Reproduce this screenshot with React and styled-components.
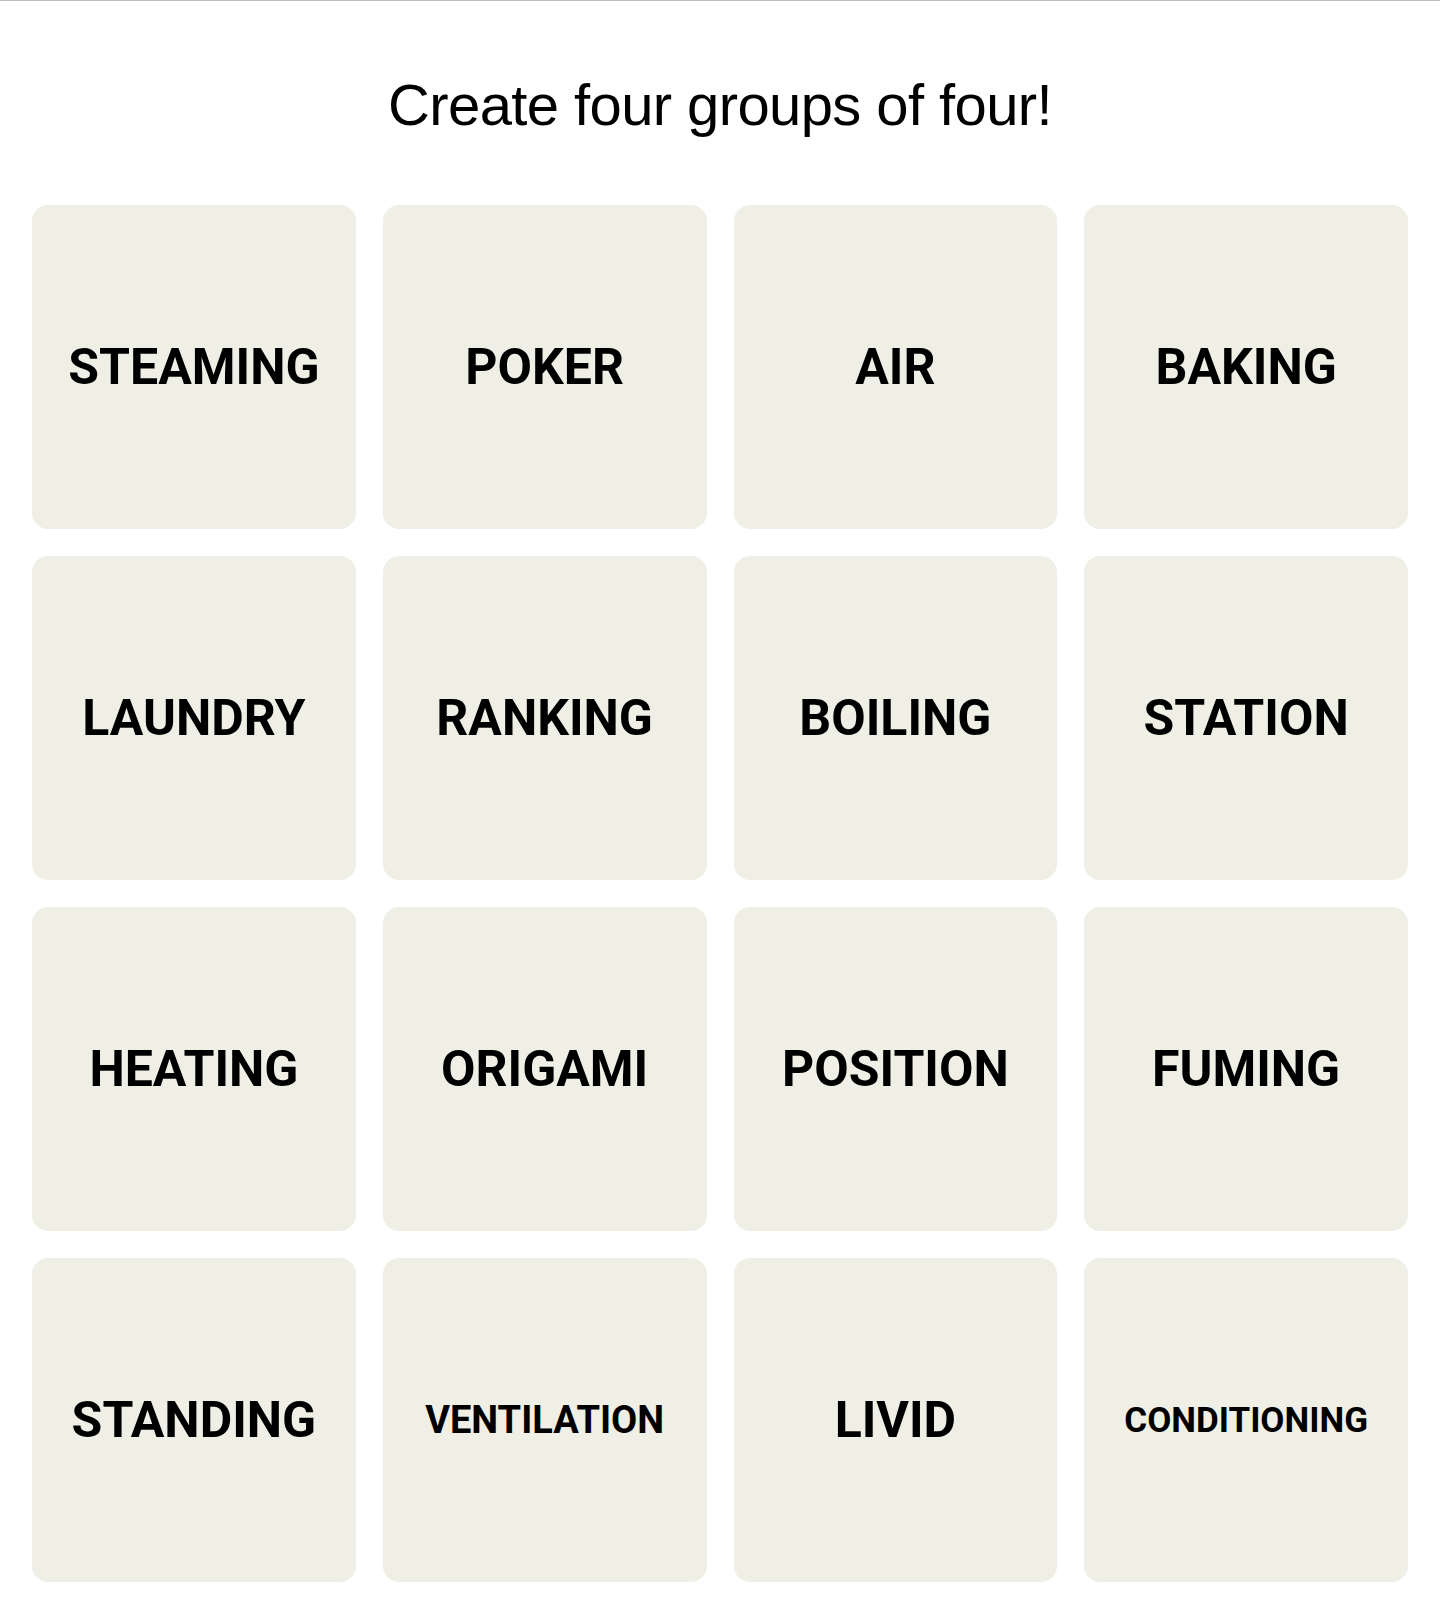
import styled, { createGlobalStyle } from "styled-components"

const words = [
    "STEAMING", "POKER", "AIR", "BAKING",
    "LAUNDRY", "RANKING", "BOILING", "STATION",
    "HEATING", "ORIGAMI", "POSITION", "FUMING",
    "STANDING", "VENTILATION", "LIVID", "CONDITIONING",
]

// long words get shrunk so they still fit inside the tile
const fontSizeFor = (word) => {
    if (word.length >= 12) return 35
    if (word.length >= 11) return 38
    return 50
}

export default function App() {
    return (
        <>
            <GlobalStyle />
            <Page>
                <Title>Create four groups of four!</Title>
                <Board>
                    {words.map((word) => (
                        <Card key={word} $size={fontSizeFor(word)}>
                            {word}
                        </Card>
                    ))}
                </Board>
            </Page>
        </>
    )
}

const GlobalStyle = createGlobalStyle`
    *{
        box-sizing:border-box;
    }

    body{
        margin:0;
        background-color:#ffffff;
        color:#000000;
        font-family:"Liberation Sans", Arial, sans-serif;
    }
`

const Page = styled.div`
    width:100%;
    min-height:1617px;
    border-top:1px solid #bcbcbc;
    padding:0 32px 36px 32px;
    display:flex;
    flex-direction: column;
    align-items:center;
`

const Title = styled.h1`
    margin:0;
    padding-top:71px;
    height:204px;
    font-family:"Liberation Sans", Arial, sans-serif;
    font-weight:400;
    font-size:58px;
    line-height:66px;
    letter-spacing:-0.6px;
    color:#000000;
`

const Board = styled.div`
    width:100%;
    display:grid;
    grid-template-columns:repeat(4, 1fr);
    grid-auto-rows:324px;
    gap:27px;
`

const Card = styled.div`
    display:flex;
    align-items:center;
    justify-content:center;
    background-color:#efefe6;
    border-radius:16px;
    font-family:Roboto, "Liberation Sans", sans-serif;
    font-weight:700;
    font-size:${({$size})=>{return $size}}px;
    text-transform:uppercase;
    color:#000000;
    user-select:none;
`
